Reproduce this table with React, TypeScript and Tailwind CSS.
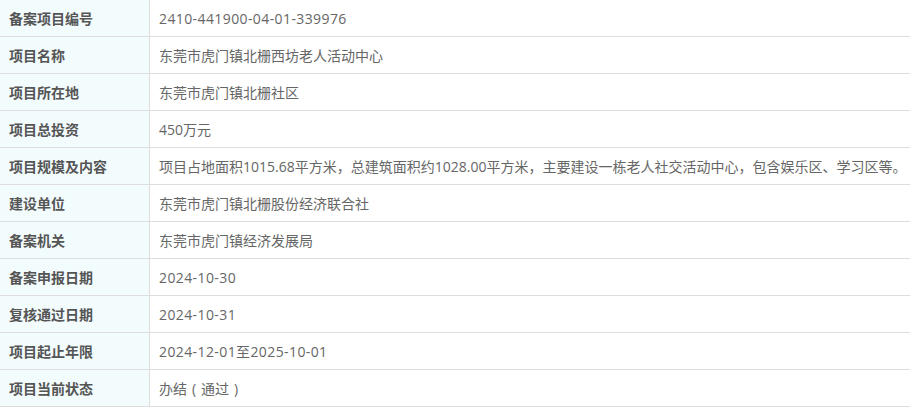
import React from "react";

type Row = { k: string; v: React.ReactNode; wide?: boolean };

const P = ({ c }: { c: string }) => (
  <span className="inline-block w-[14px] text-center">{c}</span>
);

const rows: Row[] = [
  { k: "备案项目编号", v: "2410-441900-04-01-339976", wide: true },
  { k: "项目名称", v: "东莞市虎门镇北栅西坊老人活动中心" },
  { k: "项目所在地", v: "东莞市虎门镇北栅社区" },
  { k: "项目总投资", v: "450万元" },
  {
    k: "项目规模及内容",
    v: "项目占地面积1015.68平方米，总建筑面积约1028.00平方米，主要建设一栋老人社交活动中心，包含娱乐区、学习区等。",
  },
  { k: "建设单位", v: "东莞市虎门镇北栅股份经济联合社" },
  { k: "备案机关", v: "东莞市虎门镇经济发展局" },
  { k: "备案申报日期", v: "2024-10-30", wide: true },
  { k: "复核通过日期", v: "2024-10-31", wide: true },
  { k: "项目起止年限", v: "2024-12-01至2025-10-01", wide: true },
  {
    k: "项目当前状态",
    v: (
      <>
        办结
        <P c="(" />
        通过
        <P c=")" />
      </>
    ),
  },
];

export default function App() {
  return (
    <div
      className="w-[911px] h-[407px] bg-white overflow-hidden text-[14px]"
      style={{ fontFamily: '"Open Sans", "Noto Sans CJK SC", sans-serif' }}
    >
      <div className="flex flex-col w-[910px]">
        {rows.map((r) => (
          <div key={r.k} className="flex h-[37px] border-b border-[#dedede]">
            <div className="w-[150px] shrink-0 bg-[#f3fcfd] border-r border-[#dedede] pl-[9px] flex items-center font-bold text-[#555555]">
              {r.k}
            </div>
            <div
              className={
                r.wide
                  ? "flex-1 pl-[9px] flex items-center text-[#666666] whitespace-nowrap tracking-[0.4px]"
                  : "flex-1 pl-[9px] flex items-center text-[#666666] whitespace-nowrap"
              }
            >
              {r.v}
            </div>
          </div>
        ))}
      </div>
    </div>
  );
}
